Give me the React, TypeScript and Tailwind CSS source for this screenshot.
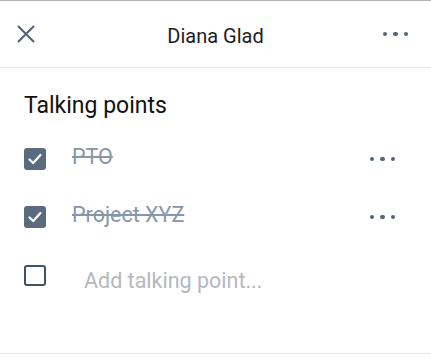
function Dots({ className }: { className?: string }) {
  return (
    <div className={'flex items-center gap-[6px] ' + (className ?? '')}>
      <span className="w-[4.5px] h-[4.5px] rounded-full bg-[#52647a]" />
      <span className="w-[4.5px] h-[4.5px] rounded-full bg-[#52647a]" />
      <span className="w-[4.5px] h-[4.5px] rounded-full bg-[#52647a]" />
    </div>
  );
}

function CloseIcon() {
  return (
    <svg width="18" height="18" viewBox="0 0 18 18" fill="none" className="text-[#4f6075]">
      <path d="M1.5 1.5 L16.5 16.5 M16.5 1.5 L1.5 16.5" stroke="currentColor" strokeWidth="2" strokeLinecap="round" />
    </svg>
  );
}

function CheckedBox() {
  return (
    <div className="w-[22px] h-[22px] rounded-[3px] bg-[#5a6a7f] flex items-center justify-center shrink-0">
      <svg width="16" height="16" viewBox="0 0 16 16" fill="none">
        <path d="M2.5 8.5 L6.2 12 L13.5 4" stroke="white" strokeWidth="2.3" strokeLinecap="round" strokeLinejoin="round" />
      </svg>
    </div>
  );
}

const points = ['PTO', 'Project XYZ'];

export default function App() {
  return (
    <div className="w-full h-[364px] bg-white border-t border-[#b3b3b3] font-['Roboto',sans-serif] flex flex-col">
      {/* Header */}
      <div className="h-[67px] grid grid-cols-[1fr_auto_1fr] items-center px-[17px] border-b border-[#e4e6e9] shrink-0">
        <CloseIcon />
        <span className="text-[20px] text-[#1c1c1e] mt-[3px]">Diana Glad</span>
        <Dots className="justify-self-end mr-[6px]" />
      </div>

      {/* Talking points */}
      <div className="flex-1 flex flex-col">
        <h2 className="text-[23px] text-[#111] pl-[24px] pt-[24px] leading-[28px] mb-[10px]">Talking points</h2>
        {points.map((p) => (
          <div key={p} className="h-[58px] flex items-center pl-[24px] pr-[36px]">
            <CheckedBox />
            <span className="ml-[26px] text-[21.5px] leading-[26px] text-[#8796a9] line-through decoration-[#8796a9] mb-[5px]">{p}</span>
            <Dots className="ml-auto" />
          </div>
        ))}
        <div className="h-[58px] flex items-center pl-[24px]">
          <div className="w-[22px] h-[21px] rounded-[3px] border-2 border-[#3e536b] shrink-0" />
          <span className="ml-[38px] text-[21.5px] leading-[26px] text-[#b4b8be] mt-[12px]">Add talking point...</span>
        </div>
      </div>
      <div className="h-[11px] border-t border-[#e8e8e8] shrink-0" />
    </div>
  );
}
